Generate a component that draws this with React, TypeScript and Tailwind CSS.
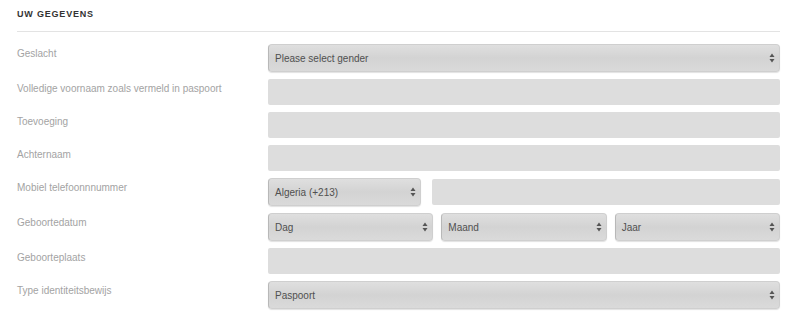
import React from 'react'

const font = { fontFamily: '"Liberation Sans", Arial, sans-serif' }

function Arrows() {
  return (
    <svg width="6" height="10" viewBox="0 0 6 10" className="shrink-0 text-[#555]">
      <path d="M3 0.5 L5.5 4 H0.5 Z" fill="currentColor" />
      <path d="M3 9.5 L5.5 6 H0.5 Z" fill="currentColor" />
    </svg>
  )
}

function Select({ value, className = '' }: { value: string; className?: string }) {
  return (
    <div
      className={`h-[28px] flex items-center justify-between pl-[6px] pr-[4px] rounded-[4px] border border-[#cfcfcf] border-l-[#b8b8b8] bg-gradient-to-b from-[#dfdfdf] via-[#d3d3d3] to-[#dadada] shadow-[0_1px_1px_rgba(0,0,0,0.12)] text-[10px] text-[#505050] ${className}`}
    >
      <span>{value}</span>
      <Arrows />
    </div>
  )
}

function Input({ className = '' }: { className?: string }) {
  return <div className={`h-[26px] rounded-[2px] bg-[#dddddd] ${className}`} />
}

function Row({ label, children }: { label: string; children: React.ReactNode }) {
  return (
    <div className="flex">
      <div className="w-[251px] shrink-0 pt-[3px] text-[10px] leading-[14px] text-[#a3a3a3]">
        {label}
      </div>
      <div className="flex-1 flex gap-[8px]">{children}</div>
    </div>
  )
}

export default function App() {
  return (
    <div className="w-[800px] h-[329px] bg-white px-[17px] pr-[20px]" style={font}>
      <div className="pt-[8px] pb-[11px] text-[9px] leading-[12px] font-bold tracking-[0.09em] text-[#333]">
        UW GEGEVENS
      </div>
      <div className="h-px bg-[#e3e3e3]" />
      <div className="flex flex-col gap-[7px] pt-[12px]">
        <Row label="Geslacht">
          <Select value="Please select gender" className="flex-1" />
        </Row>
        <Row label="Volledige voornaam zoals vermeld in paspoort">
          <Input className="flex-1" />
        </Row>
        <Row label="Toevoeging">
          <Input className="flex-1" />
        </Row>
        <Row label="Achternaam">
          <Input className="flex-1" />
        </Row>
        <Row label="Mobiel telefoonnnummer">
          <Select value="Algeria (+213)" className="w-[153px] shrink-0 mr-[3px]" />
          <Input className="flex-1 self-center" />
        </Row>
        <Row label="Geboortedatum">
          <Select value="Dag" className="flex-1" />
          <Select value="Maand" className="flex-1" />
          <Select value="Jaar" className="flex-1" />
        </Row>
        <Row label="Geboorteplaats">
          <Input className="flex-1" />
        </Row>
        <Row label="Type identiteitsbewijs">
          <Select value="Paspoort" className="flex-1" />
        </Row>
      </div>
    </div>
  )
}
